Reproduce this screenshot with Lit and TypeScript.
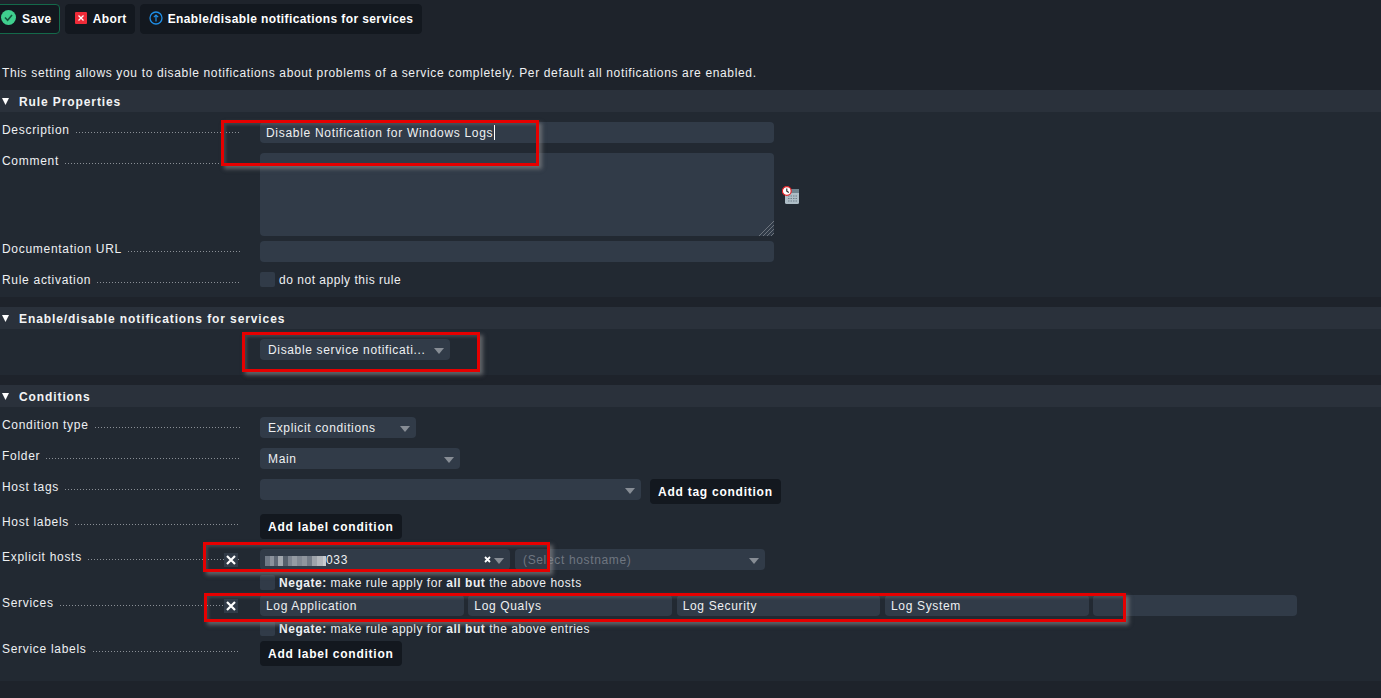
import { LitElement, html, css } from "lit";
import { customElement } from "lit/decorators.js";

const BLOCKS = [
  ["#6f7885", 5], ["#8b929c", 4], ["#5f6875", 4], ["#a2a8af", 5], ["#56606c", 5], ["#7f8691", 4],
  ["#959ba3", 5], ["#828993", 5], ["#90969e", 5], ["#747c87", 5], ["#9ea3aa", 5], ["#b4b8bd", 6], ["#c8cbce", 3],
] as [string, number][];

@customElement("app-root")
export class AppRoot extends LitElement {
  static styles = css`
    :host {
      display: block;
      position: relative;
      width: 1381px;
      height: 698px;
      overflow: hidden;
      background: #1e232b;
      color: #eef0f2;
      font: 12px/15px "Liberation Sans", Arial, sans-serif;
      letter-spacing: 0.65px;
    }
    .toolbar { display: flex; gap: 5px; padding-top: 4px; margin-left: -8px; }
    .btn {
      display: inline-flex; align-items: center; height: 30px; box-sizing: border-box;
      padding: 0 7px 0 8px; background: #13181f; border: 1px solid #13181f; border-radius: 4px;
      font-weight: 700; color: #fff; gap: 6px; white-space: nowrap; letter-spacing: 0.4px;
    }
    .btn.save { border-color: #14694a; }
    .btn.abort { padding-left: 9px; }
    .btn.info { gap: 5px; padding-right: 8px; }
    .btn svg { flex: none; display: block; margin-top: -3px; }
    .intro { margin: 0; padding: 32px 0 0 2px; height: 24px; line-height: 15px; }
    .section { margin-bottom: 10px; background: #222932; }
    .head {
      display: flex; align-items: center; height: 22px; box-sizing: border-box; padding-top: 2px; background: #2a313b;
      font-weight: 700; letter-spacing: 0.9px; color: #f3f4f5;
    }
    .head svg { margin: -2px 10px 0 2px; flex: none; }
    .body { padding: 10px 0; }
    .body.last { padding-bottom: 15px; }
    .row { display: flex; align-items: flex-start; }
    .gap { margin-top: 10px; }
    .gap5 { margin-top: 5px; }
    .label {
      width: 240px; height: 15px; flex: none; display: flex; padding: 1px 0 0 2px; box-sizing: border-box;
      margin-right: 20px; white-space: nowrap; letter-spacing: 0.7px;
    }
    .dots {
      flex: 1; margin: 9px 0 0 6px; height: 1px;
      background: repeating-linear-gradient(to right, #8a8f96 0 1px, transparent 1px 3px);
    }
    .col { flex: 1; min-width: 0; }
    .line { display: flex; align-items: center; gap: 5px; }
    .input {
      display: flex; align-items: center; box-sizing: border-box; height: 21px; padding: 2px 6px 0;
      background: #313b48; border-radius: 4px; white-space: nowrap; position: relative;
    }
    .w514 { width: 514px; }
    .spaced { letter-spacing: 0.7px; }
    .area { height: 83px; width: 514px; background: #313b48; border-radius: 4px; position: relative; flex: none; }
    .grip { position: absolute; right: 0; bottom: 0; display: block; }
    .caret { display: inline-block; width: 1px; height: 15px; background: #fff; margin: -2px 0 0 1px; }
    .cal { margin-left: 8px; flex: none; display: block; }
    .comment { display: flex; align-items: center; }
    .check { display: block; flex: none; width: 15px; height: 15px; background: #313b48; border-radius: 2px; }
    .check-line { display: flex; align-items: center; gap: 4px; height: 15px; white-space: nowrap; letter-spacing: 0.52px; }
    .check-line > span:last-child { line-height: 13px; padding-top: 2px; }
    .check-line b { font-weight: 700; }
    .select {
      display: flex; align-items: center; justify-content: space-between; box-sizing: border-box; height: 21px;
      padding: 0 6px 0 8px; background: #313b48; border-radius: 4px; white-space: nowrap;
    }
    .select > span:first-child { padding-top: 2px; }
    .arrow { display: block; flex: none; width: 0; height: 0; border: 5px solid transparent; border-top: 6px solid #878d95; border-bottom: 0; margin-top: 2px; }
    .w190 { width: 190px; }
    .w156 { width: 156px; }
    .w200 { width: 200px; }
    .w381 { width: 381px; }
    .w250 { width: 250px; }
    .ph { color: #6f7680; }
    .plain {
      display: inline-flex; align-items: center; height: 25px; box-sizing: border-box; padding: 2px 8px 0; background: #13181f;
      border-radius: 4px; font-weight: 700; letter-spacing: 0.75px; color: #fff; white-space: nowrap;
    }
    .tag { margin-left: 9px; }
    .x {
      margin: 1px 17px 0 -36px; width: 14px; height: 14px; background: #313b48; flex: none; display: flex;
      align-items: center; justify-content: center;
    }
    .select > .blur { display: flex; height: 10px; padding: 0; }
    .blur i { display: block; height: 100%; }
    .host { padding-left: 5px; }
    .host .num { padding-top: 2px; }
    .mini { margin-left: auto; margin-right: 3px; display: block; }
    .svc { display: flex; gap: 4.75px; width: 1037px; }
    .svc .input { flex: 1; min-width: 0; }
    .neg { margin-top: 5px; }
    .mark {
      position: absolute; box-sizing: border-box; border: 3px solid #e60000; pointer-events: none;
      box-shadow: 3px 3px 4px rgba(150,150,150,.55), inset 2px 2px 3px rgba(150,150,150,.25);
    }
    .m1 { left: 221px; top: 120px; width: 318px; height: 46px; }
    .m2 { left: 242px; top: 332px; width: 238px; height: 40px; }
    .m3 { left: 203px; top: 542px; width: 347px; height: 30px; }
    .m4 { left: 204px; top: 593px; width: 922px; height: 29px; }
    .spacer { height: 5px; }
    .blank { width: 260px; flex: none; }
  `;

  private tri() {
    return html`<svg width="7" height="7" viewBox="0 0 7 7"><path d="M0 0h7L3.5 7z" fill="#fff"/></svg>`;
  }

  private label(t: string) {
    return html`<div class="label"><span>${t}</span><span class="dots"></span></div>`;
  }

  private xIcon() {
    return html`<svg width="10" height="10" viewBox="0 0 10 10"><path d="M1 1l8 8M9 1l-8 8" stroke="#fff" stroke-width="2.2"/></svg>`;
  }

  private select(cls: string, t: string) {
    return html`<div class="select ${cls}"><span>${t}</span><span class="arrow"></span></div>`;
  }

  private negate(rest: string) {
    return html`<div class="check-line neg"><span class="check"></span><span><b>Negate:</b> make rule apply for <b>all but</b> the above ${rest}</span></div>`;
  }

  render() {
    return html`
      <div class="toolbar">
        <span class="btn save">
          <svg width="15" height="15" viewBox="0 0 15 15"><circle cx="7.5" cy="7.5" r="7.5" fill="#3fcf8e"/><path d="M4 7.5l2.6 2.7L11 5" fill="none" stroke="#14553d" stroke-width="1.6"/></svg>Save
        </span>
        <span class="btn abort">
          <svg width="12" height="12" viewBox="0 0 12 12"><rect width="12" height="12" rx="1" fill="#ef2b38"/><path d="M3.5 3.5l5 5M8.5 3.5l-5 5" stroke="#fff" stroke-width="1.3"/></svg>Abort
        </span>
        <span class="btn info">
          <svg width="14" height="14" viewBox="0 0 14 14"><circle cx="7" cy="7" r="6" fill="none" stroke="#1f8fe8" stroke-width="1.3"/><path d="M7 10.5V4M4.8 6.2L7 4l2.2 2.2" fill="none" stroke="#1f8fe8" stroke-width="1.2"/></svg>Enable/disable notifications for services
        </span>
      </div>
      <p class="intro">This setting allows you to disable notifications about problems of a service completely. Per default all notifications are enabled.</p>

      <section class="section">
        <div class="head">${this.tri()}Rule Properties</div>
        <div class="body">
          <div class="row">${this.label("Description")}<div class="input w514 spaced">Disable Notification for Windows Logs<span class="caret"></span></div></div>
          <div class="row gap">${this.label("Comment")}
            <div class="comment">
              <div class="area">
                <svg class="grip" width="15" height="15" viewBox="0 0 15 15"><path d="M15 0L0 15M15 4L4 15M15 8L8 15M15 12L12 15" stroke="#6d747d" stroke-width="1"/></svg>
              </div>
              <svg class="cal" width="19" height="18" viewBox="0 0 19 18">
                <rect x="3" y="3" width="14" height="15" rx="1.5" fill="#aebdc6"/>
                <rect x="3" y="3" width="14" height="4" fill="#70848f"/>
                <path d="M6 10h9M6 12.5h9M6 15h9" stroke="#6f7f8a" stroke-width="1" stroke-dasharray="1.5 1"/>
                <circle cx="4.8" cy="5" r="4.4" fill="#fff" stroke="#e5252a" stroke-width="1.2"/>
                <path d="M4.8 2.5V5.3L6.8 6.5" fill="none" stroke="#222" stroke-width="1.1"/>
              </svg>
            </div>
          </div>
          <div class="row gap5">${this.label("Documentation URL")}<div class="input w514"></div></div>
          <div class="row gap">${this.label("Rule activation")}<div class="check-line"><span class="check"></span><span>do not apply this rule</span></div></div>
        </div>
      </section>

      <section class="section">
        <div class="head">${this.tri()}Enable/disable notifications for services</div>
        <div class="body">
          <div class="row"><div class="blank"></div>${this.select("w190", "Disable service notificati...")}</div>
          <div class="spacer"></div>
        </div>
      </section>

      <section class="section">
        <div class="head">${this.tri()}Conditions</div>
        <div class="body last">
          <div class="row">${this.label("Condition type")}${this.select("w156", "Explicit conditions")}</div>
          <div class="row gap">${this.label("Folder")}${this.select("w200", "Main")}</div>
          <div class="row gap">${this.label("Host tags")}${this.select("w381", "")}<span class="plain tag">Add tag condition</span></div>
          <div class="row gap">${this.label("Host labels")}<span class="plain">Add label condition</span></div>
          <div class="row gap">${this.label("Explicit hosts")}
            <div class="col">
              <div class="line">
                <span class="x">${this.xIcon()}</span>
                <div class="select w250 host">
                  <span class="blur">${BLOCKS.map(([c, w]) => html`<i style="background:${c};width:${w}px"></i>`)}</span><span class="num">033</span>
                  <svg class="mini" width="7" height="7" viewBox="0 0 7 7"><path d="M1 1l5 5M6 1l-5 5" stroke="#fff" stroke-width="1.8"/></svg>
                  <span class="arrow"></span>
                </div>
                <div class="select w250"><span class="ph">(Select hostname)</span><span class="arrow"></span></div>
              </div>
              ${this.negate("hosts")}
            </div>
          </div>
          <div class="row gap5">${this.label("Services")}
            <div class="col">
              <div class="line">
                <span class="x">${this.xIcon()}</span>
                <div class="svc">
                  <div class="input">Log Application</div>
                  <div class="input">Log Qualys</div>
                  <div class="input">Log Security</div>
                  <div class="input">Log System</div>
                  <div class="input"></div>
                </div>
              </div>
              ${this.negate("entries")}
            </div>
          </div>
          <div class="row gap5">${this.label("Service labels")}<span class="plain">Add label condition</span></div>
        </div>
      </section>

      <div class="mark m1"></div>
      <div class="mark m2"></div>
      <div class="mark m3"></div>
      <div class="mark m4"></div>
    `;
  }
}
